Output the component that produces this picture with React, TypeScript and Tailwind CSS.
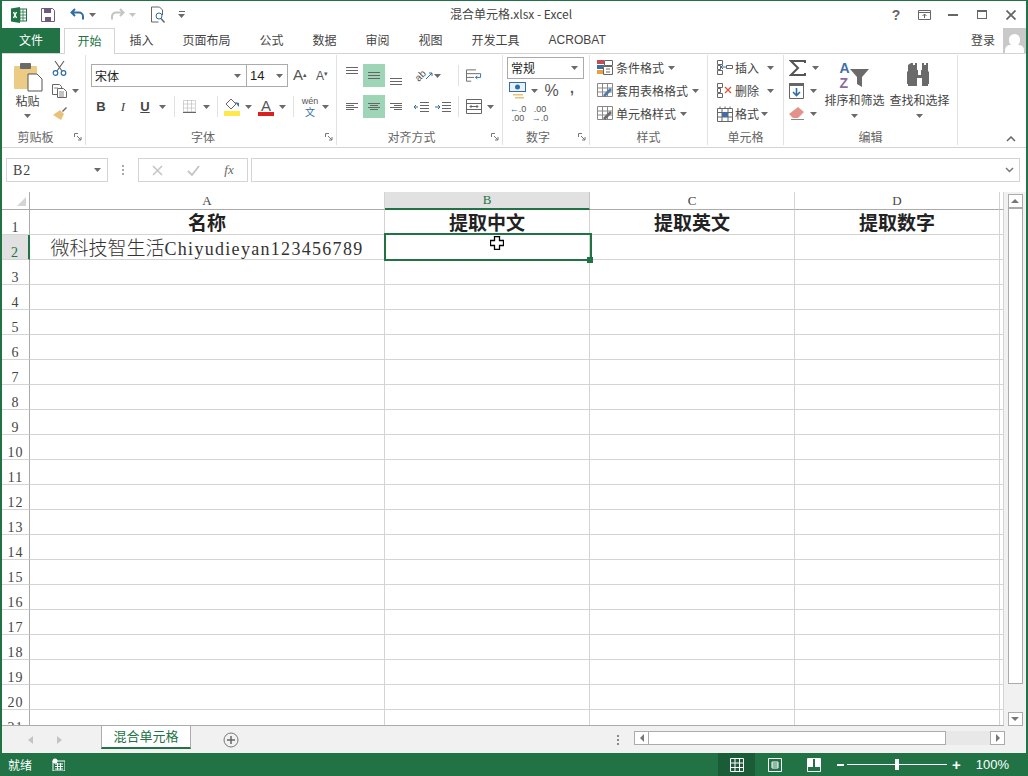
import React from 'react';

const GREEN = '#217346';
const rows = Array.from({ length: 21 }, (_, i) => i + 1);

const Caret = ({ light = false }: { light?: boolean }) => (
  <svg width="7" height="4" viewBox="0 0 7 4" className="shrink-0">
    <path d="M0 0h7L3.500 4z" fill={light ? '#c4c4c4' : '#6a6a6a'} />
  </svg>
);

const Sep = () => <div className="w-px h-[21px] bg-[#e1e1e1]" />;

const Launcher = () => (
  <svg width="8" height="8" viewBox="0 0 8 8" className="shrink-0 absolute right-[3px] top-[4px]">
    <path d="M.5 4V.5H4M3 3l4 4M7 4v3H4" fill="none" stroke="#777" />
  </svg>
);

const Group = ({ label, w, launcher = false, children }: { label: string; w: string; launcher?: boolean; children: React.ReactNode }) => (
  <div className={`${w} h-[90px] mt-[1px] flex flex-col border-r border-[#e1e1e1] shrink-0`}>
    <div className="h-[74px] flex">{children}</div>
    <div className={`relative h-[16px] flex items-center justify-center text-[12px] leading-none text-[#666] ${launcher ? 'pr-[16px]' : ''}`}>
      {label}
      {launcher && <Launcher />}
    </div>
  </div>
);

const AlignIcon = ({ lines }: { lines: string }) => (
  <svg width="14" height="10" viewBox="0 0 14 10">
    <path d={lines} stroke="#666" fill="none" />
  </svg>
);

const GridIcon = ({ color = '#666' }: { color?: string }) => (
  <svg width="14" height="14" viewBox="0 0 14 14">
    <path d="M.5.500h13v13H.500zM.5 5h13M.5 9.500h13M5 .5v13M9.500.5v13" stroke={color} fill="none" />
  </svg>
);

const StyleRow = ({ icon, label }: { icon: React.ReactNode; label: string }) => (
  <div className="h-[23px] flex items-center gap-[2px] text-[12px] text-[#444]">
    <span className="w-[18px] flex justify-center">{icon}</span>
    <span>{label}</span>
    <span className="ml-[2px]"><Caret /></span>
  </div>
);

const TitleBar = () => (
  <div className="h-[27px] flex items-center shrink-0">
    <div className="w-[360px] flex items-center pl-[9px]">
      <svg width="16" height="16" viewBox="0 0 16 16">
        <rect x="6" y="2" width="9.500" height="12" fill="#fff" stroke="#217346" />
        <path d="M9 2v12M12 2v12M6 5h9M6 8h9M6 11h9" stroke="#217346" strokeWidth=".8" />
        <path d="M0 1.500 9 0v16L0 14.500z" fill="#217346" />
        <path d="M2.500 5l3 6M5.500 5l-3 6" stroke="#fff" strokeWidth="1.400" />
      </svg>
      <svg width="14" height="14" viewBox="0 0 14 14" className="ml-[14px]">
        <path d="M.5.5h11l2 2v11H.5z" fill="none" stroke="#6d5a80" />
        <path d="M3 1h7v4H3zM4 9h6v4H4z" fill="#6d5a80" />
      </svg>
      <svg width="15" height="13" viewBox="0 0 15 13" className="ml-[15px]">
        <path d="M5 1 1.500 4.500 5 8M2 4.500h7a4 4 0 0 1 4 4v3" fill="none" stroke="#2f6ea5" strokeWidth="2" />
      </svg>
      <span className="ml-[4px]"><Caret /></span>
      <svg width="15" height="13" viewBox="0 0 15 13" className="ml-[14px]">
        <path d="M10 1l3.500 3.500L10 8M13 4.500H6a4 4 0 0 0-4 4v3" fill="none" stroke="#c4c4c4" strokeWidth="2" />
      </svg>
      <span className="ml-[4px]"><Caret light /></span>
      <svg width="15" height="18" viewBox="0 0 15 18" className="ml-[15px]">
        <path d="M.5 1h8l3 3v5M.5 1v15h7" fill="none" stroke="#666" />
        <circle cx="8" cy="10" r="3" fill="none" stroke="#2f6ea5" />
        <path d="M10 12.500l3.500 4" stroke="#666" strokeWidth="1.500" />
      </svg>
      <span className="ml-[12px] flex flex-col gap-[2px] items-center">
        <span className="w-[6px] h-px bg-[#666]" />
        <Caret />
      </span>
    </div>
    <div className="w-[298px] pb-[1px] text-center text-[12px] text-[#444]">混合单元格.xlsx - Excel</div>
    <div className="flex-1 flex items-center justify-end pr-[10px] text-[#666]">
      <span className="w-[12px] text-center text-[14px] font-bold leading-none [font-family:'Liberation_Sans',sans-serif]">?</span>
      <svg width="13" height="10" viewBox="0 0 13 10" className="ml-[16px]">
        <path d="M.5.5h12v9H.5zM.5 2.500h12M6.500 8V4M4.500 6l2-2 2 2" fill="none" stroke="#666" />
      </svg>
      <span className="ml-[17px] w-[10px] h-[2px] bg-[#666]" />
      <span className="ml-[19px] w-[10px] h-[9px] border border-[#666] border-t-2" />
      <svg width="10" height="10" viewBox="0 0 10 10" className="ml-[19px]">
        <path d="M.5.5l9 9M9.500.5l-9 9" stroke="#666" strokeWidth="1.800" />
      </svg>
    </div>
  </div>
);

const TabRow = () => (
  <div className="h-[26px] flex shrink-0 relative border-b border-[#d4d4d4] text-[12px]">
    <div className="w-[58px] h-[25px] pb-[1px] flex items-center justify-center text-white" style={{ background: GREEN }}>文件</div>
    <div className="ml-[4px] w-[51px] h-[26px] pb-[1px] -mb-px flex items-center justify-center bg-white border border-b-0 border-[#d4d4d4] text-[#217346] z-10">开始</div>
    <div className="flex text-[#444]">
      {['插入', '页面布局', '公式', '数据', '审阅', '视图', '开发工具'].map((t) => (
        <div key={t} className="px-[14.500px] pb-[1px] flex items-center">{t}</div>
      ))}
      <div className="px-[14.500px] pb-[1px] flex items-center [font-family:'Liberation_Sans',sans-serif]">ACROBAT</div>
    </div>
    <div className="flex-1 flex justify-end items-center">
      <span className="text-[#444] mr-[8px] pb-[1px]">登录</span>
      <div className="w-[23px] h-[25px] bg-[#c9c9c9] flex flex-col items-center justify-end overflow-hidden">
        <span className="w-[11px] h-[12px] rounded-full bg-white" />
        <span className="w-[19px] h-[8px] rounded-t-[5px] bg-white mt-[-1px]" />
      </div>
    </div>
  </div>
);

const ClipboardGroup = () => (
  <Group label="剪贴板" w="w-[84px]" launcher>
    <div className="w-[50px] flex flex-col items-center pt-[7px] pl-[1px]">
      <svg width="30" height="30" viewBox="0 0 30 30">
        <rect x="1" y="4" width="23" height="23" rx="1" fill="#eccb85" />
        <rect x="7" y="1" width="11" height="6" rx="1" fill="#6a6a6a" />
        <path d="M15 12h9l5 5v12H15z" fill="#fff" stroke="#555" />
      </svg>
      <span className="text-[12px] leading-none mt-[3px] text-[#444]">粘贴</span>
      <span className="mt-[7px]"><Caret /></span>
    </div>
    <div className="flex flex-col pt-[1px]">
      <div className="h-[23px] flex items-center">
        <svg width="15" height="16" viewBox="0 0 15 16">
          <path d="M3 1l7 10M12 1 5 11" stroke="#666" strokeWidth="1.200" />
          <circle cx="3.500" cy="13" r="2.300" fill="none" stroke="#2f6ea5" strokeWidth="1.200" />
          <circle cx="11.500" cy="13" r="2.300" fill="none" stroke="#2f6ea5" strokeWidth="1.200" />
        </svg>
      </div>
      <div className="h-[23px] flex items-center gap-[5px]">
        <svg width="15" height="14" viewBox="0 0 15 14">
          <path d="M.5.5h7l2 2v8H.5z" fill="#fff" stroke="#666" />
          <path d="M5.500 4.500h6l3 3v6h-9z" fill="#fff" stroke="#666" />
          <path d="M7 8h5M7 10h5M7 12h5M2 4h4" stroke="#888" />
        </svg>
        <Caret />
      </div>
      <div className="h-[23px] flex items-center">
        <svg width="16" height="15" viewBox="0 0 16 15">
          <path d="M10 5l4-4 1 1-4 4z" fill="#6a6a6a" />
          <path d="M8 4l4 4-3 6-8-5z" fill="#e9c27a" />
        </svg>
      </div>
    </div>
  </Group>
);

const FontGroup = () => (
  <Group label="字体" w="w-[251px]" launcher>
    <div className="flex flex-col pt-[9px] pl-[4px]">
      <div className="h-[23px] flex items-center">
        <div className="ml-[1px] w-[156px] h-[23px] border border-[#ababab] bg-white flex items-center justify-between px-[3px] pr-[5px] text-[12px] text-[#222]">
          <span>宋体</span><Caret />
        </div>
        <div className="w-[42px] h-[23px] -ml-px border border-[#ababab] bg-white flex items-center justify-between pl-[3px] pr-[4px] text-[13px] text-[#222] [font-family:'Liberation_Sans',sans-serif]">
          <span>14</span><Caret />
        </div>
        <span className="ml-[1px] w-[22px] text-center text-[15px] text-[#555] [font-family:'Liberation_Sans',sans-serif]">A<sup className="text-[7px]">▴</sup></span>
        <span className="w-[22px] text-center text-[12px] text-[#555] [font-family:'Liberation_Sans',sans-serif]">A<sup className="text-[7px]">▾</sup></span>
      </div>
      <div className="h-[23px] mt-[8px] flex items-center text-[#444] [font-family:'Liberation_Sans',sans-serif]">
        <span className="w-[22px] text-center font-bold text-[13px]">B</span>
        <span className="w-[22px] text-center italic text-[13px] [font-family:'Liberation_Serif',serif]">I</span>
        <span className="w-[22px] text-center underline text-[13px] font-bold">U</span>
        <span className="w-[12px] flex justify-center"><Caret /></span>
        <span className="w-[12px] flex justify-center"><Sep /></span>
        <span className="w-[19px] flex justify-center">
          <svg width="13" height="13" viewBox="0 0 13 13">
            <path d="M.5.500h12v11H.500zM.5 4h12M.5 8h12M4.500.5v11M8.500.5v11" stroke="#aaa" strokeDasharray="1 1" fill="none" />
            <path d="M0 12.500h13" stroke="#666" />
          </svg>
        </span>
        <span className="w-[14px] flex justify-center"><Caret /></span>
        <span className="w-[8px] flex justify-center"><Sep /></span>
        <span className="w-[20px] flex justify-center ml-[1px]">
          <svg width="16" height="18" viewBox="0 0 16 18">
            <path d="M2 6l5-5 5 5-5 5z" fill="#fff" stroke="#666" />
            <path d="M11 4l4 1v4z" fill="#3a6ea5" />
            <rect y="13" width="16" height="5" fill="#ffe94a" />
          </svg>
        </span>
        <span className="w-[12px] flex justify-center"><Caret /></span>
        <span className="w-[24px] flex flex-col items-center leading-none">
          <span className="text-[15px] h-[14px] text-[#555]">A</span>
          <span className="w-[16px] h-[4px] bg-[#d92121]" />
        </span>
        <span className="w-[8px] flex justify-center"><Caret /></span>
        <span className="w-[11px] flex justify-center ml-[2px]"><Sep /></span>
        <span className="w-[22px] flex flex-col items-center text-[#555]">
          <span className="text-[9px] leading-[10px]">wén</span>
          <span className="text-[10px] leading-[12px] text-[#2f6ea5] [font-family:'Noto_Sans_CJK_SC',sans-serif]">文</span>
        </span>
        <span className="w-[8px] flex justify-center"><Caret /></span>
      </div>
    </div>
  </Group>
);

const AlignGroup = () => (
  <Group label="对齐方式" w="w-[166px]" launcher>
    <div className="flex flex-col pt-[9px] pl-[4px]">
      <div className="h-[23px] flex items-center">
        <span className="w-[22px] h-[23px] flex justify-center pt-[3px]"><AlignIcon lines="M1 .5h12M1 3.500h12M1 6.500h12" /></span>
        <span className="w-[22px] h-[23px] flex justify-center items-center bg-[#9fd5b7]"><AlignIcon lines="M1 1.500h12M1 4.500h12M1 7.500h12" /></span>
        <span className="w-[22px] h-[23px] flex justify-center items-end pb-[2px]"><AlignIcon lines="M1 3.500h12M1 6.500h12M1 9.500h12" /></span>
        <span className="w-[20px] ml-[7px] flex items-center justify-center">
          <span className="text-[10px] leading-none text-[#555] -rotate-45 [font-family:'Liberation_Sans',sans-serif]">ab</span>
          <svg width="8" height="8" viewBox="0 0 8 8" className="-ml-[1px]">
            <path d="M1 7l6-6M7 1H4M7 1v3" stroke="#2f6ea5" fill="none" />
          </svg>
        </span>
        <span className="w-[7px] flex justify-center"><Caret /></span>
        <span className="w-[16px] flex justify-center ml-[9px]"><Sep /></span>
        <span className="w-[16px] flex justify-center">
          <svg width="17" height="14" viewBox="0 0 17 14">
            <path d="M.5.500h10M.5 4.500h15M.5 8.500h8M.5 12.500h5M.5.500v12" stroke="#666" fill="none" />
            <path d="M15.500 4.500v4h-5M12 7l-2 1.500 2 1.500" stroke="#2f6ea5" fill="none" />
          </svg>
        </span>
      </div>
      <div className="h-[23px] mt-[8px] flex items-center">
        <span className="w-[22px] flex justify-center"><AlignIcon lines="M1 1.500h12M1 3.500h8M1 5.500h12M1 7.500h8" /></span>
        <span className="w-[22px] h-[23px] flex justify-center items-center bg-[#9fd5b7]"><AlignIcon lines="M1 1.500h12M3 3.500h8M1 5.500h12M3 7.500h8" /></span>
        <span className="w-[22px] flex justify-center"><AlignIcon lines="M1 1.500h12M5 3.500h8M1 5.500h12M5 7.500h8" /></span>
        <span className="w-[16px] ml-[6px] flex justify-center">
          <svg width="16" height="10" viewBox="0 0 16 10">
            <path d="M7 .5h9M7 3.500h9M7 6.500h9M7 9.500h9" stroke="#666" />
            <path d="M5 5H1M3 3 1 5l2 2" stroke="#2f6ea5" fill="none" />
          </svg>
        </span>
        <span className="w-[16px] ml-[6px] flex justify-center">
          <svg width="16" height="10" viewBox="0 0 16 10">
            <path d="M7 .5h9M7 3.500h9M7 6.500h9M7 9.500h9" stroke="#666" />
            <path d="M0 5h5M3 3l2 2-2 2" stroke="#2f6ea5" fill="none" />
          </svg>
        </span>
        <span className="w-[10px] flex justify-center ml-[2px]"><Sep /></span>
        <span className="w-[16px] ml-[3px] flex justify-center">
          <svg width="16" height="15" viewBox="0 0 16 15">
            <path d="M.5.500h15v14H.500zM.5 4.500h15M.5 10.500h15M4 7.500h8M5.500 6 4 7.500 5.500 9M10.500 6 12 7.500 10.500 9" stroke="#666" fill="none" />
          </svg>
        </span>
        <span className="w-[12px] ml-[2px] flex justify-center"><Caret /></span>
      </div>
    </div>
  </Group>
);

const NumberGroup = () => (
  <Group label="数字" w="w-[87px]" launcher>
    <div className="flex flex-col pt-[2px] pl-[4px]">
      <div className="w-[77px] h-[22px] border border-[#ababab] bg-white flex items-center justify-between px-[3px] pr-[5px] text-[12px] text-[#222]">
        <span>常规</span><Caret />
      </div>
      <div className="h-[23px] flex items-center [font-family:'Liberation_Sans',sans-serif] text-[#555]">
        <span className="w-[22px] flex justify-center">
          <svg width="18" height="17" viewBox="0 0 18 17">
            <rect x=".5" y=".5" width="16" height="9" fill="#e9f1f8" stroke="#2f6ea5" />
            <circle cx="8.500" cy="5" r="2.500" fill="#2f6ea5" />
            <path d="M4 12h10v1.500H4zM6 15h9v1.500H6z" fill="#e9c27a" />
          </svg>
        </span>
        <span className="w-[10px] flex justify-center"><Caret /></span>
        <span className="w-[25px] text-center text-[16px]">%</span>
        <span className="w-[16px] text-center font-bold text-[14px] leading-none pb-[6px]">,</span>
      </div>
      <div className="h-[23px] flex items-center text-[9px] leading-[9px] text-[#555] [font-family:'Liberation_Sans',sans-serif]">
        <span className="w-[22px] text-center"><span className="text-[#2f6ea5]">←</span>.0<br />.00</span>
        <span className="w-[22px] text-center">.00<br /><span className="text-[#2f6ea5]">→</span>.0</span>
      </div>
    </div>
  </Group>
);

const StyleIcon = ({ accent }: { accent: string }) => (
  <svg width="16" height="15" viewBox="0 0 16 15">
    <path d="M.5.500h15v13H.500zM.5 5h15M.5 9h15M5.500.5v13M10.500.5v13" stroke="#888" fill="#fff" />
    <path d="M6 12l7-7 2 2-7 7z" fill={accent} />
  </svg>
);

const StylesGroup = () => (
  <Group label="样式" w="w-[118px]">
    <div className="flex flex-col pl-[6px] pt-[1px]">
      <StyleRow
        label="条件格式"
        icon={
          <svg width="16" height="15" viewBox="0 0 16 15">
            <path d="M0 0h7v4H0z" fill="#c0504d" />
            <path d="M0 5h7v4H0z" fill="#3f6fa8" />
            <path d="M0 10h7v4H0z" fill="#e9a13b" />
            <path d="M7.500.5h8v5h-8zM6.500 6.500h9v8h-9zM9 9h4M9 12h4" stroke="#666" fill="#fff" />
          </svg>
        }
      />
      <StyleRow label="套用表格格式" icon={<StyleIcon accent="#4f7ba6" />} />
      <StyleRow label="单元格样式" icon={<StyleIcon accent="#6a6a6a" />} />
    </div>
  </Group>
);

const CellsGroup = () => (
  <Group label="单元格" w="w-[76px]">
    <div className="flex flex-col pl-[7px] pt-[1px] text-[12px] text-[#444]">
      <div className="h-[23px] flex items-center">
        <span className="w-[20px] flex justify-center">
          <svg width="16" height="15" viewBox="0 0 16 15">
            <path d="M.5.500h5v4h-5zM.5 10.500h5v4h-5zM.5 5.500h3v4h-3zM9.500 5.500h6v3h-6z" stroke="#666" fill="none" />
            <path d="M9 7H4M6 5 4 7l2 2" stroke="#2f6ea5" fill="none" />
          </svg>
        </span>
        <span>插入</span>
        <span className="ml-[8px]"><Caret /></span>
      </div>
      <div className="h-[23px] flex items-center">
        <span className="w-[20px] flex justify-center">
          <svg width="16" height="15" viewBox="0 0 16 15">
            <path d="M.5.500h5v4h-5zM.5 10.500h5v4h-5zM.5 5.500h3v4h-3z" stroke="#666" fill="none" />
            <path d="M8 4l6 6M14 4l-6 6" stroke="#d5573b" strokeWidth="1.300" />
          </svg>
        </span>
        <span>删除</span>
        <span className="ml-[8px]"><Caret /></span>
      </div>
      <div className="h-[23px] flex items-center">
        <span className="w-[20px] flex justify-center">
          <svg width="16" height="16" viewBox="0 0 16 16">
            <path d="M.5 2.500h15v13H.500zM5 2.500v13M11 2.500v13M.5 6.500h15M.5 11h15M3 .5v2M8 .5v2M13 .5v2" stroke="#666" fill="none" />
            <rect x="5" y="6.500" width="6" height="4.500" fill="#3f6fa8" />
          </svg>
        </span>
        <span>格式</span>
        <span className="ml-[2px]"><Caret /></span>
      </div>
    </div>
  </Group>
);

const EditingGroup = () => (
  <Group label="编辑" w="w-[174px]">
    <div className="flex flex-col pl-[5px] pt-[1px] w-[38px]">
      <div className="h-[23px] flex items-center gap-[5px]">
        <svg width="18" height="16" viewBox="0 0 18 16"><path d="M16 3V1H2l7 7-7 7h14v-2" fill="none" stroke="#555" strokeWidth="2" /></svg>
        <Caret />
      </div>
      <div className="h-[23px] flex items-center gap-[5px]">
        <svg width="16" height="16" viewBox="0 0 16 16">
          <path d="M.5.500h14v15H.5z" fill="#fff" stroke="#666" />
          <path d="M0 0h15v3H0z" fill="#666" />
          <path d="M7.500 5v7M4 9l3.500 3.500L11 9" stroke="#2f6ea5" strokeWidth="1.600" fill="none" />
        </svg>
        <Caret />
      </div>
      <div className="h-[23px] flex items-center gap-[5px]">
        <svg width="16" height="13" viewBox="0 0 16 13">
          <path d="M9 0l6 5-6 6H4L0 7z" fill="#e5938a" />
          <path d="M2 12.500h13" stroke="#888" />
        </svg>
        <Caret />
      </div>
    </div>
    <div className="w-[65px] flex flex-col items-center pt-[6px]">
      <div className="h-[30px] flex items-start [font-family:'Liberation_Sans',sans-serif] font-bold">
        <span className="flex flex-col text-[14px] leading-[15px]">
          <span className="text-[#3f6fa8]">A</span>
          <span className="text-[#8a6c9e]">Z</span>
        </span>
        <svg width="20" height="20" viewBox="0 0 20 20" className="mt-[8px]">
          <path d="M0 0h19l-7 8v10l-5-3V8z" fill="#6a6a6a" />
        </svg>
      </div>
      <span className="text-[12px] leading-none mt-[3px] text-[#444] whitespace-nowrap">排序和筛选</span>
      <span className="mt-[8px]"><Caret /></span>
    </div>
    <div className="w-[65px] flex flex-col items-center pt-[6px]">
      <svg width="27" height="25" viewBox="0 0 27 25" className="mt-[1px] mb-[4px]">
        <path d="M5 1h2v2h2V1h2v7h1v5h3V8h1V1h2v2h2V1h2v8l1 1v12h-1v2H16v-8h-5v8H2v-2H1V10l1-1V3l3-2z" fill="#6a6a6a" />
      </svg>
      <span className="text-[12px] leading-none mt-[3px] text-[#444] whitespace-nowrap">查找和选择</span>
      <span className="mt-[8px]"><Caret /></span>
    </div>
  </Group>
);

const Ribbon = () => (
  <div className="h-[94px] flex shrink-0 border-b border-[#d4d4d4] bg-white relative">
    <ClipboardGroup />
    <FontGroup />
    <AlignGroup />
    <NumberGroup />
    <StylesGroup />
    <CellsGroup />
    <EditingGroup />
    <svg width="10" height="6" viewBox="0 0 10 6" className="absolute right-[10px] bottom-[5px]">
      <path d="M1 5l4-4 4 4" fill="none" stroke="#666" strokeWidth="1.500" />
    </svg>
  </div>
);

const FormulaBar = () => (
  <div className="h-[44px] shrink-0 flex items-start pt-[10px] pl-[4px] pr-[6px] bg-white">
    <div className="w-[102px] h-[24px] border border-[#d4d4d4] flex items-center justify-between pl-[6px] pr-[6px] text-[14px] tracking-[1px] text-[#444] [font-family:'Liberation_Serif',serif]">
      <span>B2</span><Caret />
    </div>
    <div className="w-[30px] flex flex-col items-center gap-[2px] pt-[7px]">
      <span className="w-[2px] h-[2px] bg-[#aaa]" />
      <span className="w-[2px] h-[2px] bg-[#aaa]" />
      <span className="w-[2px] h-[2px] bg-[#aaa]" />
    </div>
    <div className="w-[110px] h-[24px] border border-[#d4d4d4] flex items-center">
      <span className="w-[36px] flex justify-center">
        <svg width="11" height="11" viewBox="0 0 11 11"><path d="M1 1l9 9M10 1l-9 9" stroke="#c4c4c4" strokeWidth="1.500" /></svg>
      </span>
      <span className="w-[36px] flex justify-center">
        <svg width="13" height="11" viewBox="0 0 13 11"><path d="M1 6l4 4 7-9" stroke="#c4c4c4" strokeWidth="1.800" fill="none" /></svg>
      </span>
      <span className="w-[36px] text-center italic text-[13px] text-[#666] [font-family:'Liberation_Serif',serif]">fx</span>
    </div>
    <div className="flex-1 ml-[3px] h-[24px] border border-[#d4d4d4] flex items-center justify-end pr-[5px]">
      <svg width="9" height="6" viewBox="0 0 9 6"><path d="M1 1l3.500 3.500L8 1" stroke="#777" strokeWidth="1.500" fill="none" /></svg>
    </div>
  </div>
);

const Sheet = () => (
  <div className="w-[1002px] h-[534px] relative overflow-hidden border-b border-[#ababab]">
    <div className="grid grid-cols-[28px_355px_205px_205px_205px_4px] text-[#222]">
      {/* column header */}
      <div className="h-[18px] border-r border-b border-[#ababab] flex items-end justify-end pr-[3px] pb-[3px]">
        <svg width="9" height="9" viewBox="0 0 9 9"><path d="M9 0v9H0z" fill="#d4d4d4" /></svg>
      </div>
      {['A', 'B', 'C', 'D', ''].map((c) => (
        <div
          key={c}
          className={
            c === 'B'
              ? "h-[18px] bg-[#e1e1e1] border-b-2 border-r border-b-[#217346] border-r-[#c4c4c4] flex items-center justify-center text-[13px] text-[#217346] [font-family:'Liberation_Serif',serif]"
              : "h-[18px] border-b border-r border-b-[#ababab] border-r-[#d4d4d4] flex items-center justify-center text-[13px] text-[#444] [font-family:'Liberation_Serif',serif]"
          }
        >
          {c}
        </div>
      ))}
      {rows.map((r) => (
        <React.Fragment key={r}>
          <div
            className={
              r === 2
                ? "h-[25px] bg-[#e1e1e1] border-r-2 border-b border-r-[#217346] border-b-[#d4d4d4] flex items-end justify-center text-[14px] tracking-[1px] leading-[13px] text-[#217346] [font-family:'Liberation_Serif',serif]"
                : "h-[25px] border-r border-b border-r-[#ababab] border-b-[#d4d4d4] flex items-end justify-center text-[14px] tracking-[1px] leading-[13px] text-[#444] [font-family:'Liberation_Serif',serif]"
            }
          >
            {r}
          </div>
          {[0, 1, 2, 3, 4].map((c) => (
            <div key={c} className="h-[25px] border-r border-b border-[#d4d4d4] flex items-center justify-center whitespace-nowrap">
              {r === 1 && c < 4 && (
                <span className="text-[19px] font-bold leading-[22px]">{['名称', '提取中文', '提取英文', '提取数字'][c]}</span>
              )}
              {r === 2 && c === 0 && (
                <span className="pt-[2px] text-[19px] leading-[22px] text-[#333] font-light">
                  微科技智生活<span className="text-[18px] tracking-[1.300px] [font-family:'Liberation_Serif',serif]">Chiyudieyan123456789</span>
                </span>
              )}
            </div>
          ))}
        </React.Fragment>
      ))}
    </div>
    {/* selected cell */}
    <div className="absolute left-[382px] top-[41px] w-[208px] h-[28px] border-2 border-[#217346]" />
    <div className="absolute left-[585px] top-[65px] w-[6px] h-[6px] bg-[#217346]" />
    <svg width="14" height="14" viewBox="0 0 14 14" className="absolute left-[488px] top-[44px]">
      <path d="M4.500.5h5v4h4v5h-4v4h-5v-4h-4v-5h4z" fill="#fff" stroke="#000" strokeWidth="1.300" />
    </svg>
  </div>
);

const ScrollBtn = ({ d }: { d: string }) => (
  <div className="w-[15px] h-[14px] border border-[#ababab] bg-white flex items-center justify-center">
    <svg width="8" height="8" viewBox="0 0 8 8"><path d={d} fill="#777" /></svg>
  </div>
);

const VScroll = () => (
  <div className="w-[22px] h-[534px] flex flex-col items-center pr-[2px] pl-[2px] pt-[2px] bg-[#f1f1f1]">
    <ScrollBtn d="M0 6h8L4 2z" />
    <div className="w-[15px] h-[476px] bg-white border border-[#ababab]" />
    <div className="flex-1" />
    <ScrollBtn d="M0 2h8L4 6z" />
  </div>
);

const SheetTabs = () => (
  <div className="h-[27px] shrink-0 flex bg-[#f1f1f1]">
    <div className="w-[99px] flex items-center pl-[26px] gap-[22px]">
      <svg width="6" height="8" viewBox="0 0 6 8"><path d="M5 0v8L0 4z" fill="#c4c4c4" /></svg>
      <svg width="6" height="8" viewBox="0 0 6 8"><path d="M1 0v8l5-4z" fill="#c4c4c4" /></svg>
    </div>
    <div className="w-[90px] h-[24px] bg-white border-x border-[#ababab] border-b-2 border-b-[#217346] -mt-px flex items-center justify-center text-[13px] text-[#217346]">
      混合单元格
    </div>
    <div className="ml-[32px] flex items-center">
      <svg width="16" height="16" viewBox="0 0 16 16">
        <circle cx="8" cy="8" r="7" fill="none" stroke="#777" />
        <path d="M8 4v8M4 8h8" stroke="#666" strokeWidth="1.500" />
      </svg>
    </div>
    <div className="ml-[378px] flex flex-col gap-[2px] justify-center">
      <span className="w-[2px] h-[2px] bg-[#888]" />
      <span className="w-[2px] h-[2px] bg-[#888]" />
      <span className="w-[2px] h-[2px] bg-[#888]" />
    </div>
    <div className="ml-[15px] mt-[5px] h-[14px] w-[371px] flex">
      <ScrollBtn d="M6 0v8L2 4z" />
      <div className="w-[298px] h-[14px] bg-white border border-[#ababab] -ml-px" />
      <div className="flex-1 bg-[#e8e8e8]" />
      <ScrollBtn d="M2 0v8l4-4z" />
    </div>
  </div>
);

const StatusBar = () => (
  <div className="h-[23px] shrink-0 flex items-center text-white text-[12px]" style={{ background: GREEN }}>
    <span className="pl-[6px] w-[50px]">就绪</span>
    <svg width="13" height="13" viewBox="0 0 13 13">
      <circle cx="3" cy="3" r="2.500" fill="#fff" />
      <path d="M3 3h10v10H1V3z" fill="none" stroke="#fff" />
      <path d="M3 6h8M3 8.500h8M3 11h8M5.500 5v7M8.500 5v7" stroke="#fff" />
    </svg>
    <div className="ml-[653px] w-[37px] h-[23px] bg-[#1a5c38] flex items-center justify-center"><GridIcon color="#fff" /></div>
    <span className="w-[40px] flex justify-center">
      <svg width="14" height="14" viewBox="0 0 14 14"><path d="M.5.500h13v13H.500zM4 4h6v6H4zM4 6h6M4 8h6" stroke="#fff" fill="none" /></svg>
    </span>
    <span className="w-[37px] flex justify-center">
      <svg width="14" height="14" viewBox="0 0 14 14">
        <path d="M.5.500h13v13H.500z" stroke="#fff" fill="none" />
        <path d="M1 1h5v8H1zM8 1h5v8H8z" fill="#fff" />
      </svg>
    </span>
    <span className="ml-[5px] w-[7px] h-[2px] bg-white" />
    <div className="ml-[3px] w-[100px] h-[10px] flex items-center justify-center relative">
      <span className="w-full h-px bg-white" />
      <span className="absolute left-[48px] w-[4px] h-[11px] bg-white" />
    </div>
    <span className="ml-[5px] text-[15px] font-bold leading-none [font-family:'Liberation_Sans',sans-serif]">+</span>
    <span className="ml-[15px] text-[13px] [font-family:'Liberation_Sans',sans-serif]">100%</span>
  </div>
);

export default function App() {
  return (
    <div
      className="w-[1028px] h-[776px] flex flex-col overflow-hidden bg-white border-x-2 border-t border-[#217346] [font-family:'Noto_Sans_CJK_SC','Liberation_Sans',sans-serif]"
    >
      <TitleBar />
      <TabRow />
      <Ribbon />
      <FormulaBar />
      <div className="flex shrink-0">
        <Sheet />
        <VScroll />
      </div>
      <SheetTabs />
      <StatusBar />
    </div>
  );
}
